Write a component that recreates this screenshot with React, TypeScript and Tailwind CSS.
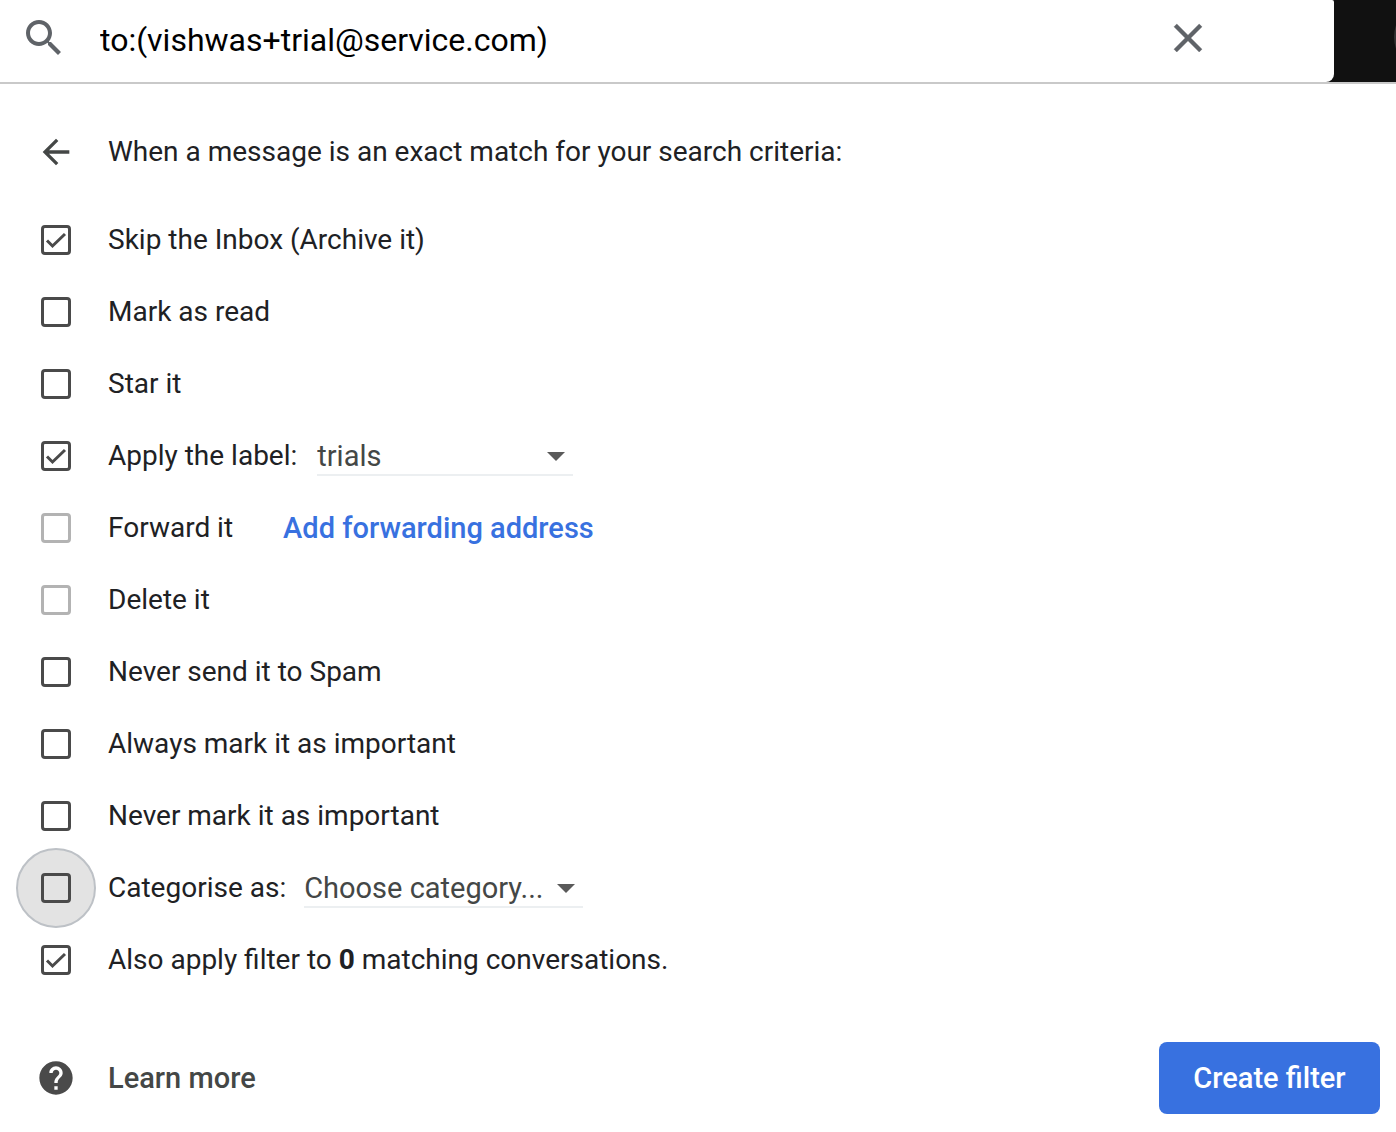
import { useState, type ReactNode } from "react";

type Option = {
  id: string;
  label: ReactNode;
  checked?: boolean;
  disabled?: boolean;
  focused?: boolean;
  extra?: ReactNode;
};

function CheckBox({ option }: { option: Option }) {
  const [checked, setChecked] = useState(Boolean(option.checked));

  return (
    <span
      className={
        option.focused
          ? "grid size-20 shrink-0 place-items-center rounded-full border-2 border-[#bdc1c6] bg-[#e3e3e3]"
          : "grid size-20 shrink-0 place-items-center"
      }
    >
      <input
        id={option.id}
        type="checkbox"
        checked={checked}
        disabled={option.disabled}
        onChange={(e) => setChecked(e.target.checked)}
        className="peer col-start-1 row-start-1 size-[30px] appearance-none rounded-[4px] border-3 border-[#4a4a4a] disabled:border-[#b3b3b3]"
      />
      <svg
        className="pointer-events-none invisible col-start-1 row-start-1 size-[30px] peer-checked:visible"
        viewBox="0 0 30 30"
        fill="none"
        stroke="#4a4a4a"
        strokeWidth={3}
        aria-hidden
      >
        <path d="M6 15.5l5.5 5.5L24 9" />
      </svg>
    </span>
  );
}

function UnderlinedSelect({
  label,
  value,
  className,
}: {
  label: string;
  value: string;
  className: string;
}) {
  return (
    <span className={`grid items-center ${className}`}>
      <select
        aria-label={label}
        className="col-start-1 row-start-1 h-10 w-full appearance-none border-b-2 border-[#eceff1] text-[29px] text-[#444746]"
      >
        <option>{value}</option>
      </select>
      <svg
        className="pointer-events-none col-start-1 row-start-1 mr-2 h-[9px] w-[18px] justify-self-end"
        viewBox="0 0 18 9"
        aria-hidden
      >
        <path d="M0 0h18L9 9z" fill="#5a5a5a" />
      </svg>
    </span>
  );
}

const OPTIONS: Option[] = [
  { id: "archive", label: "Skip the Inbox (Archive it)", checked: true },
  { id: "read", label: "Mark as read" },
  { id: "star", label: "Star it" },
  {
    id: "label",
    label: "Apply the label:",
    checked: true,
    extra: <UnderlinedSelect label="Label" value="trials" className="ml-5 w-64" />,
  },
  {
    id: "forward",
    label: "Forward it",
    disabled: true,
    extra: (
      <a href="#forwarding" className="ml-[50px] text-[29px] font-medium text-[#3871e0]">
        Add forwarding address
      </a>
    ),
  },
  { id: "delete", label: "Delete it", disabled: true },
  { id: "never-spam", label: "Never send it to Spam" },
  { id: "important", label: "Always mark it as important" },
  { id: "not-important", label: "Never mark it as important" },
  {
    id: "category",
    label: "Categorise as:",
    focused: true,
    extra: (
      <UnderlinedSelect
        label="Category"
        value="Choose category..."
        className="ml-[18px] w-[279px]"
      />
    ),
  },
  {
    id: "apply-existing",
    label: (
      <>
        Also apply filter to <b>0</b> matching conversations.
      </>
    ),
    checked: true,
  },
];

function SearchBar() {
  const [query, setQuery] = useState("to:(vishwas+trial@service.com)");

  return (
    <header className="relative h-[84px] overflow-hidden border-b-2 border-[#c9c9c9] bg-[#111111] pr-[62px]">
      <div className="flex h-full items-center rounded-tr-xs rounded-br-lg bg-white pr-[122px] pl-5">
        <button type="button" aria-label="Search" className="mb-1.5 shrink-0">
          <svg className="size-12" viewBox="0 0 24 24" fill="#5f6368" aria-hidden>
            <path d="M15.5 14h-.79l-.28-.27C15.41 12.59 16 11.11 16 9.5 16 5.91 13.09 3 9.5 3S3 5.91 3 9.5 5.91 16 9.5 16c1.61 0 3.09-.59 4.23-1.57l.27.28v.79l5 4.99L20.49 19l-4.99-5zm-6 0C7.01 14 5 11.99 5 9.5S7.01 5 9.5 5 14 7.01 14 9.5 11.99 14 9.5 14z" />
          </svg>
        </button>
        <input
          type="text"
          aria-label="Search mail"
          value={query}
          onChange={(e) => setQuery(e.target.value)}
          className="mb-0.5 ml-8 min-w-0 flex-1 text-[32px] text-black outline-none"
        />
        <button type="button" aria-label="Clear search" className="mb-1.5 shrink-0">
          <svg
            className="size-12"
            viewBox="0 0 24 24"
            fill="#5f6368"
            stroke="#5f6368"
            strokeWidth={0.2}
            aria-hidden
          >
            <path d="M19 6.41L17.59 5 12 10.59 6.41 5 5 6.41 10.59 12 5 17.59 6.41 19 12 13.41 17.59 19 19 17.59 13.41 12z" />
          </svg>
        </button>
      </div>
      <span className="absolute top-0 -right-[72px] size-[74px] rounded-full bg-[#333333]" />
    </header>
  );
}

export default function App() {
  return (
    <div className="bg-white font-['Roboto',sans-serif] text-[28px] leading-10 text-[#202124]">
      <SearchBar />
      <form className="px-4 pt-8 pb-[18px]" onSubmit={(e) => e.preventDefault()}>
        <div className="mb-4 flex h-[72px] items-center">
          <button type="button" aria-label="Back" className="grid w-20 place-items-center">
            <svg className="size-10" viewBox="0 0 24 24" fill="#444746" aria-hidden>
              <path d="M20 11H7.83l5.59-5.59L12 4l-8 8 8 8 1.41-1.41L7.83 13H20v-2z" />
            </svg>
          </button>
          <h1 className="ml-3">When a message is an exact match for your search criteria:</h1>
        </div>

        <ul>
          {OPTIONS.map((option) => (
            <li key={option.id} className="flex h-[72px] items-center">
              <CheckBox option={option} />
              <label htmlFor={option.id} className="ml-3">
                {option.label}
              </label>
              {option.extra}
            </li>
          ))}
        </ul>

        <footer className="mt-[46px] flex items-center text-[29px] font-medium">
          <span className="grid w-20 place-items-center">
            <svg className="size-10" viewBox="0 0 24 24" fill="#4a4a4a" aria-hidden>
              <path d="M12 2C6.48 2 2 6.48 2 12s4.48 10 10 10 10-4.48 10-10S17.52 2 12 2zm1 17h-2v-2h2v2zm2.07-7.75l-.9.92C13.45 12.9 13 13.5 13 15h-2v-.5c0-1.1.45-2.1 1.17-2.83l1.24-1.26c.37-.36.59-.86.59-1.41 0-1.1-.9-2-2-2s-2 .9-2 2H8c0-2.21 1.79-4 4-4s4 1.79 4 4c0 .88-.36 1.68-.93 2.25z" />
            </svg>
          </span>
          <a href="#learn-more" className="ml-3 text-[#444746]">
            Learn more
          </a>
          <button
            type="submit"
            className="ml-auto h-[72px] w-[221px] rounded-lg bg-[#3871e0] text-white"
          >
            Create filter
          </button>
        </footer>
      </form>
    </div>
  );
}
